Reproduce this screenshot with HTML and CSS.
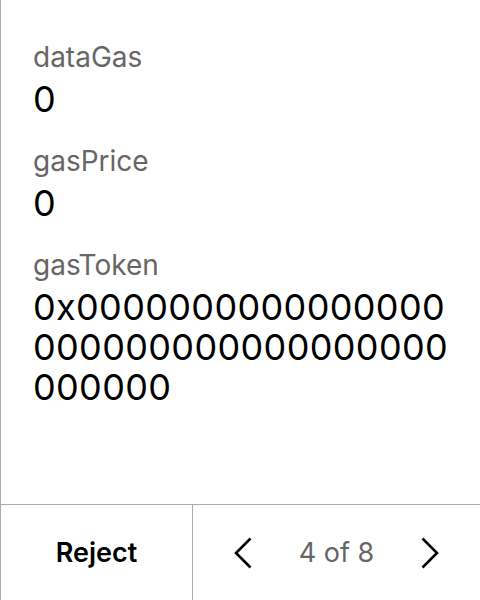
FILE: index.html
```html
<!DOCTYPE html>
<html>
<head>
<meta charset="utf-8">
<link rel="stylesheet" href="styles.css">
</head>
<body>
<div class="screen">
  <div class="content">
    <div class="field">
      <div class="label">dataGas</div>
      <div class="value">0</div>
    </div>
    <div class="field">
      <div class="label">gasPrice</div>
      <div class="value">0</div>
    </div>
    <div class="field">
      <div class="label">gasToken</div>
      <div class="value">0x0000000000000000000000000000000000000000</div>
    </div>
  </div>
  <div class="footer">
    <div class="reject">Reject</div>
    <div class="pager">
      <svg class="chev" width="20" height="32" viewBox="0 0 20 32"><path d="M17.5 1.5 L3 16 L17.5 30.5" fill="none" stroke="#000" stroke-width="2.6"/></svg>
      <span class="count">4 of 8</span>
      <svg class="chev" width="20" height="32" viewBox="0 0 20 32"><path d="M2.5 1.5 L17 16 L2.5 30.5" fill="none" stroke="#000" stroke-width="2.6"/></svg>
    </div>
  </div>
</div>
</body>
</html>
```
FILE: styles.css
```css
html, body {
  margin: 0;
  padding: 0;
  background: #fff;
}
body {
  font-family: Inter, "Noto Sans", sans-serif;
}
.screen {
  width: 479px;
  height: 600px;
  border-left: 1px solid #aaa;
  display: flex;
  flex-direction: column;
}
.content {
  flex: 1;
  padding: 39px 24px 0 32px;
  display: flex;
  flex-direction: column;
  gap: 24px;
}
.label {
  font-size: 28px;
  line-height: 37px;
  color: #666;
}
.value {
  margin-top: 3px;
  font-size: 36px;
  line-height: 40px;
  letter-spacing: 0.35px;
  color: #000;
  word-break: break-all;
}
.footer {
  height: 95px;
  border-top: 1px solid #aaa;
  display: flex;
}
.reject {
  width: 191px;
  border-right: 1px solid #aaa;
  display: flex;
  align-items: center;
  justify-content: center;
  font-size: 27px;
  font-weight: 600;
  color: #000;
}
.pager {
  flex: 1;
  display: flex;
  align-items: center;
  justify-content: space-between;
  padding: 0 40px;
}
.count {
  font-size: 27px;
  color: #666;
}
```
